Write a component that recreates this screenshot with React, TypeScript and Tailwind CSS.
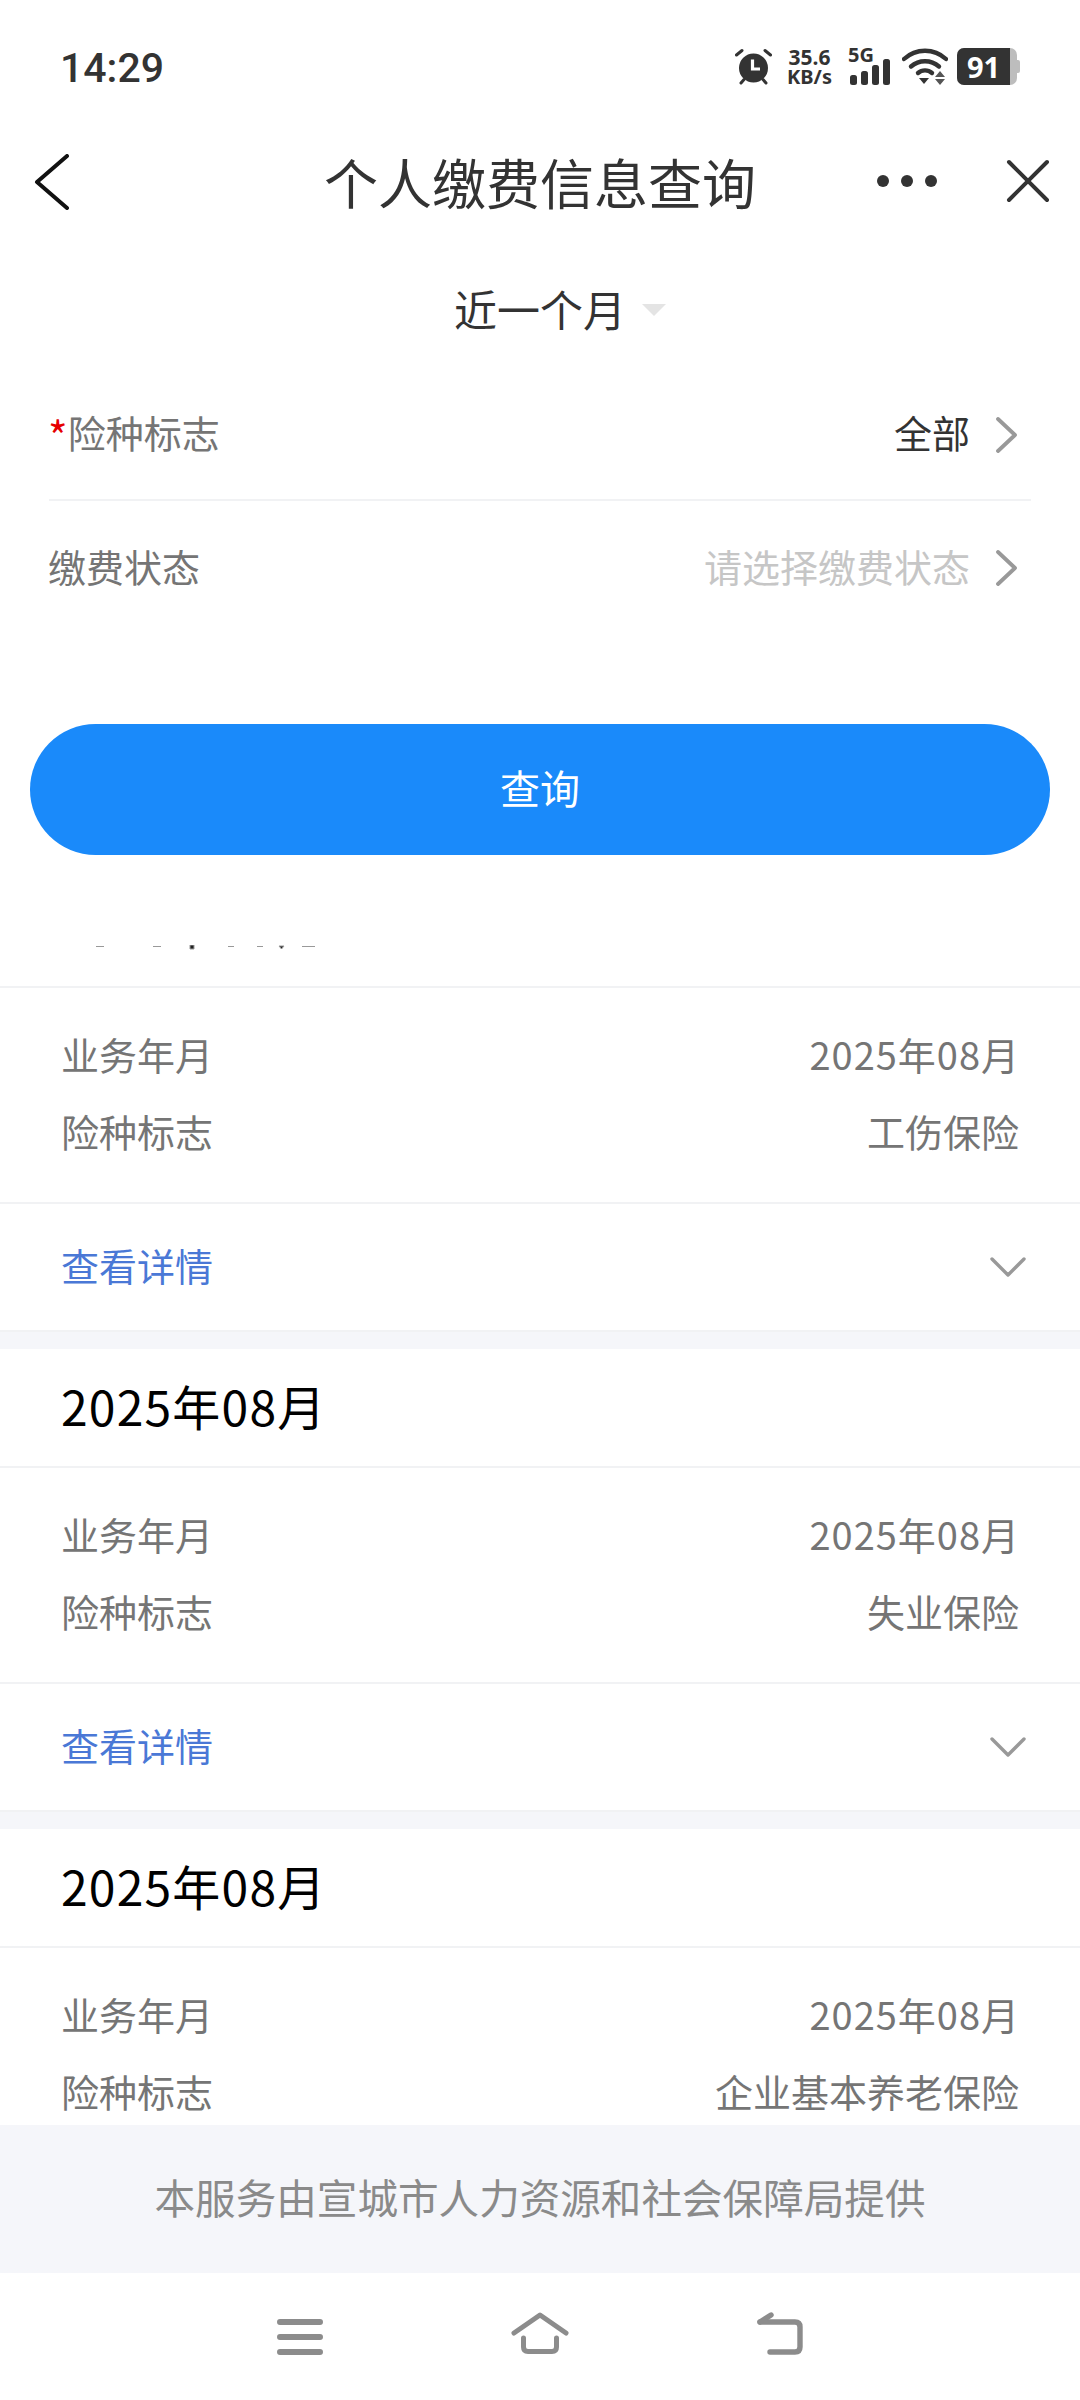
const FONT = "font-['Noto_Sans_CJK_SC','Noto_Sans',sans-serif]";

function StatusIcons() {
  return (
    <div className="flex items-center h-[37px] text-[#333]">
      <svg width="37" height="37" viewBox="0 0 37 37" className="mr-[15px]">
        <circle cx="18.5" cy="20" r="14.5" fill="#333" />
        <path d="M1.5 7 L7 2.5 M35.5 7 L30 2.5 M6 35 L9 31.5 M31 35 L28 31.5" stroke="#333" strokeWidth="3" strokeLinecap="round" />
        <path d="M17.5 11.5 V21 H25" stroke="#fff" strokeWidth="3.2" fill="none" />
      </svg>
      <div className="w-[45px] mr-[16px] flex flex-col items-center gap-[2px] font-['Noto_Sans',sans-serif] font-bold">
        <span className="text-[21px] h-[18px] leading-[18px]">35.6</span>
        <span className="text-[20px] h-[18px] leading-[18px] whitespace-nowrap">KB/s</span>
      </div>
      <div className="relative w-[43px] h-[37px] mr-[11px]">
        <svg width="43" height="37" viewBox="0 0 43 37" className="absolute left-0 top-0">
          <rect x="2" y="27" width="7" height="10" rx="2.5" fill="#333" />
          <rect x="13" y="23" width="7" height="14" rx="2.5" fill="#333" />
          <rect x="24" y="17" width="7" height="20" rx="2.5" fill="#333" />
          <rect x="35" y="11" width="7" height="26" rx="2.5" fill="#333" />
        </svg>
        <span className="absolute left-0 top-[-3px] text-[20px] leading-[20px] font-bold font-['Noto_Sans',sans-serif]">5G</span>
      </div>
      <svg width="46" height="37" viewBox="0 0 46 37" className="mr-[9px]">
        <path d="M2 11 C14 0 32 0 44 11" stroke="#333" strokeWidth="4.4" fill="none" strokeLinecap="round" />
        <path d="M9 18.5 C17 11.5 29 11.5 37 18.5" stroke="#333" strokeWidth="4.4" fill="none" strokeLinecap="round" />
        <path d="M16 25 C20 21.5 26 21.5 30 25" stroke="#333" strokeWidth="4.4" fill="none" strokeLinecap="round" />
        <path d="M17 30 H27 L22 36 Z" fill="#333" />
        <path d="M33 29 H43 L38 23 Z M33 31 H43 L38 37 Z" fill="#555" />
      </svg>
      <div className="flex items-center h-[37px]">
        <div className="w-[60px] h-[37px] rounded-[7px] bg-[#bdbdbd] overflow-hidden">
          <div className="w-[53px] h-[37px] bg-[#333] flex items-center justify-center text-white text-[29px] font-bold font-['Noto_Sans',sans-serif] leading-none">91</div>
        </div>
        <div className="w-[3px] h-[13px] bg-[#bdbdbd] rounded-r-[2px]" />
      </div>
    </div>
  );
}

function Chevron() {
  return (
    <svg width="22" height="36" viewBox="0 0 22 36" fill="none" className="ml-[26px] mr-[13px]">
      <path d="M2 2 L19 18 L2 34" stroke="#999" strokeWidth="3.8" strokeLinecap="round" strokeLinejoin="round" />
    </svg>
  );
}

function Info({ value }: { value: string }) {
  return (
    <div className="px-[61px] pt-[27px] pb-[33px] text-[38px] text-[#757575]">
      <div className="flex justify-between items-center h-[77px]">
        <span>业务年月</span>
        <span className="tracking-[1px] mr-[-1px]">2025年08月</span>
      </div>
      <div className="flex justify-between items-center h-[77px]">
        <span>险种标志</span>
        <span>{value}</span>
      </div>
    </div>
  );
}

function Details() {
  return (
    <div className="h-[130px] border-y-2 border-[#f1f2f4] flex items-center justify-between pl-[61px] pr-[54px]">
      <span className="text-[38px] text-[#4a78d6] mb-[6px]">查看详情</span>
      <svg width="36" height="20" viewBox="0 0 36 20" fill="none">
        <path d="M2 2 L18 18 L34 2" stroke="#999" strokeWidth="3.4" strokeLinecap="round" strokeLinejoin="round" />
      </svg>
    </div>
  );
}

function CardTitle() {
  return (
    <div className="h-[119px] border-b-2 border-[#f1f2f4] flex items-center pl-[61px] text-[48px] tracking-[1.2px] text-black">
      <span className="mb-[6px]">2025年08月</span>
    </div>
  );
}

export default function App() {
  return (
    <div className={`w-[1080px] h-[2400px] bg-white flex flex-col overflow-hidden ${FONT}`}>
      {/* status bar */}
      <div className="h-[134px] shrink-0 flex items-start justify-between pt-[48px] pl-[60px] pr-[60px]">
        <span className="text-[41px] leading-[40px] font-medium text-[#333] font-['Roboto',sans-serif]">14:29</span>
        <StatusIcons />
      </div>

      {/* nav bar */}
      <div className="relative h-[98px] shrink-0 flex items-center justify-center">
        <svg width="36" height="56" viewBox="0 0 36 56" fill="none" className="absolute left-[34px] top-[20px]">
          <path d="M33 2 L3 28 L33 54" stroke="#111" strokeWidth="4" strokeLinecap="round" strokeLinejoin="round" />
        </svg>
        <span className="text-[54px] leading-none text-[#333] mb-[3px]">个人缴费信息查询</span>
        <div className="absolute left-[877px] top-[41px] flex gap-[12px]">
          <span className="w-[12px] h-[12px] rounded-full bg-[#333]" />
          <span className="w-[12px] h-[12px] rounded-full bg-[#333]" />
          <span className="w-[12px] h-[12px] rounded-full bg-[#333]" />
        </div>
        <svg width="44" height="44" viewBox="0 0 44 44" fill="none" className="absolute left-[1006px] top-[25px]">
          <path d="M3 3 L41 41 M41 3 L3 41" stroke="#333" strokeWidth="4" strokeLinecap="round" />
        </svg>
      </div>

      {/* period filter */}
      <div className="h-[138px] shrink-0 pt-[14px] flex items-center justify-center">
        <div className="flex items-center ml-[40px]">
          <span className="text-[43px] leading-none text-[#333]">近一个月</span>
          <span className="ml-[16px] mt-[4px] w-0 h-0 border-x-[12px] border-x-transparent border-t-[12px] border-t-[#e4e4e4]" />
        </div>
      </div>

      {/* form */}
      <div className="shrink-0 px-[49px] text-[38px]">
        <div className="h-[131px] border-b-2 border-[#f1f2f4] flex items-center justify-between">
          <span className="text-[#757575] mb-[6px] ml-[-1px]"><span className="relative top-[5px] text-[#e60000] text-[42px] leading-none">*</span>险种标志</span>
          <span className="flex items-center text-[#333]"><span className="mb-[6px]">全部</span><Chevron /></span>
        </div>
        <div className="h-[134px] flex items-center justify-between">
          <span className="text-[#757575] mb-[6px] ml-[-1px]">缴费状态</span>
          <span className="flex items-center text-[#c6c6c6]"><span className="mb-[6px]">请选择缴费状态</span><Chevron /></span>
        </div>
      </div>

      {/* query button */}
      <div className="shrink-0 px-[30px] mt-[89px]">
        <div className="h-[131px] rounded-full bg-[#1a8afa] flex items-center justify-center text-[40px] text-white">
          <span className="mb-[6px]">查询</span>
        </div>
      </div>

      {/* results */}
      <div className="flex-1 min-h-0 overflow-hidden">
        <div className="relative h-[133px] border-b-2 border-[#f1f2f4]">
          <svg width="260" height="6" viewBox="0 0 260 6" className="absolute left-[60px] top-[90px]">
            <path d="M36 1.5 H44 M93 1.5 H101 M130 0 H134 V4 H130 Z M168 1.5 H174 M197 1.5 H203 M219 1 H224 L221.5 4 Z M242 1.5 H255" stroke="#999" strokeWidth="1" fill="#222" />
          </svg>
        </div>
        <Info value="工伤保险" />
        <Details />
        <div className="h-[17px] bg-[#f5f6fa]" />
        <CardTitle />
        <Info value="失业保险" />
        <Details />
        <div className="h-[17px] bg-[#f5f6fa]" />
        <CardTitle />
        <Info value="企业基本养老保险" />
      </div>

      {/* footer */}
      <div className="h-[148px] shrink-0 bg-[#f5f6fa] flex items-center justify-center text-[40.6px] text-[#8a8a8a]">
        <span className="mb-[4px]">本服务由宣城市人力资源和社会保障局提供</span>
      </div>

      {/* system navigation */}
      <div className="h-[127px] shrink-0 flex items-start pt-[38px] pl-[277px]">
        <svg width="46" height="46" viewBox="0 0 46 46" fill="none">
          <path d="M3 11 H43 M3 26 H43 M3 41 H43" stroke="#8c8c8c" strokeWidth="6" strokeLinecap="round" />
        </svg>
        <svg width="60" height="46" viewBox="0 0 60 46" fill="none" className="ml-[187px]">
          <path d="M4 22 L30 4 L56 22" stroke="#8c8c8c" strokeWidth="5" strokeLinecap="round" strokeLinejoin="round" />
          <path d="M13.5 27 V36 Q13.5 40.5 18 40.5 H42 Q46.5 40.5 46.5 36 V27" stroke="#8c8c8c" strokeWidth="5" strokeLinecap="round" />
        </svg>
        <svg width="50" height="46" viewBox="0 0 50 46" fill="none" className="ml-[186px]">
          <path d="M4 11 H39 Q44 11 44 16 V36 Q44 41 39 41 H14" stroke="#8c8c8c" strokeWidth="5.4" strokeLinecap="round" />
          <path d="M4 11 L15 4" stroke="#8c8c8c" strokeWidth="5.4" strokeLinecap="round" />
        </svg>
      </div>
    </div>
  );
}
